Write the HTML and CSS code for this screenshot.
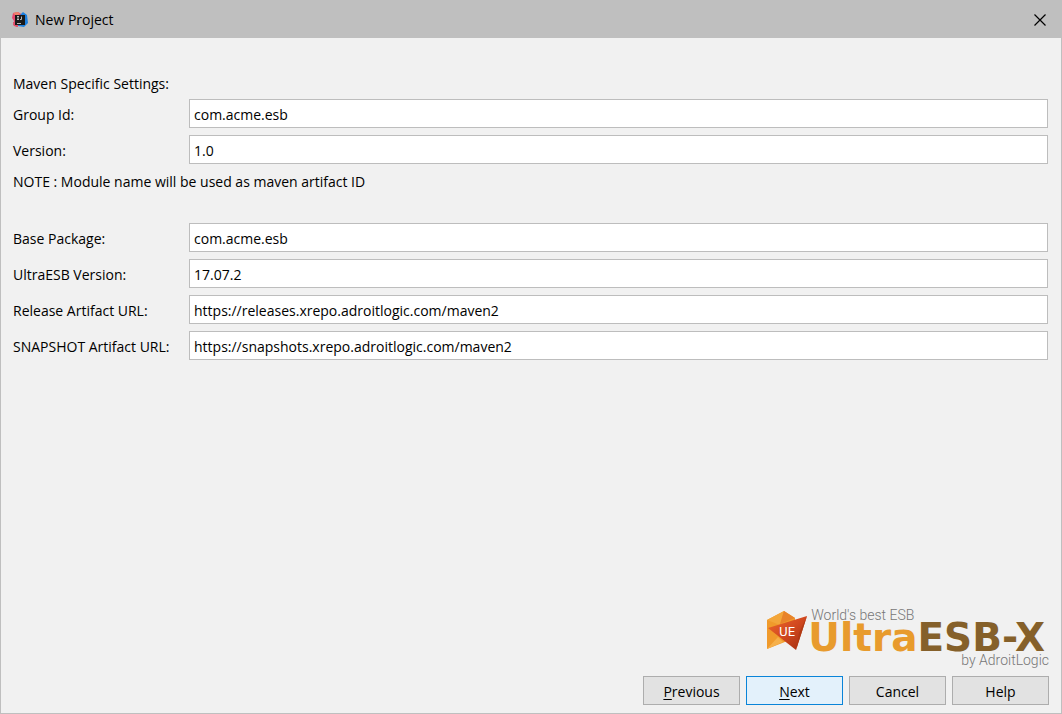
FILE: index.html
```html
<!DOCTYPE html>
<html lang="en">
<head>
<meta charset="utf-8">
<meta name="viewport" content="width=device-width, initial-scale=1">
<title>New Project</title>
<link rel="stylesheet" href="styles.css">
</head>
<body>
<div class="dialog">
  <header class="titlebar">
    <svg class="app-icon" viewBox="0 0 16 16" aria-hidden="true">
      <path d="M1 1 6 0l5 3-2 8-4 4-4-2 1-4-2-3z" fill="#e8486f"/>
      <path d="M1 10h5v5l-4-1z" fill="#e0506a"/>
      <path d="M8 3l3-3 4 3 1 8-4 4-6-1z" fill="#1c80e0"/>
      <path d="M1 1l5-1 2 2-4 2z" fill="#f0806a"/>
      <rect x="3" y="3" width="10" height="10" fill="#1a1a1a"/>
      <path d="M5 4.500h2M6 4.500v3M5 7.500h2M8 7.500h1.500v-3M5 11.500h4" stroke="#bbb" fill="none"/>
    </svg>
    <h1 class="title">New Project</h1>
    <button class="close" type="button" aria-label="Close">
      <svg class="close-icon" viewBox="0 0 12 12" aria-hidden="true"><path d="M.5.5l11 11M11.500.5l-11 11" stroke="#000" stroke-width="1.200" fill="none"/></svg>
    </button>
  </header>
  <form class="content">
    <h2 class="heading">Maven Specific Settings:</h2>
    <div class="fields">
      <label for="group">Group Id:</label>
      <input id="group" type="text" value="com.acme.esb">
      <label for="version">Version:</label>
      <input id="version" type="text" value="1.0">
    </div>
    <p class="note">NOTE : Module name will be used as maven artifact ID</p>
    <div class="fields">
      <label for="package">Base Package:</label>
      <input id="package" type="text" value="com.acme.esb">
      <label for="esb">UltraESB Version:</label>
      <input id="esb" type="text" value="17.07.2">
      <label for="release">Release Artifact URL:</label>
      <input id="release" type="text" value="https://releases.xrepo.adroitlogic.com/maven2">
      <label for="snapshot">SNAPSHOT Artifact URL:</label>
      <input id="snapshot" type="text" value="https://snapshots.xrepo.adroitlogic.com/maven2">
    </div>
    <div class="brand">
      <svg class="brand-mark" viewBox="0 0 42 42">
        <defs>
          <linearGradient id="red" x1="0" y1="0" x2="1" y2="1">
            <stop offset="0" stop-color="#ef6a2c"/><stop offset=".5" stop-color="#d1481f"/><stop offset="1" stop-color="#9e2d10"/>
          </linearGradient>
        </defs>
        <path d="M1 10 18 1l11 7v20L1 39z" fill="#f09a2b"/>
        <path d="M1 10 18 1l-4 14z" fill="#f3a63a"/>
        <path d="M18 1l11 7-15 6z" fill="#e8832a"/>
        <path d="M1 39 12 27l5 5z" fill="#f6b04a"/>
        <path d="M2 18 41 6 30 40z" fill="url(#red)"/>
        <path d="M41 6 33 23l-3 17z" fill="#b23a14"/>
        <text class="mark-text" x="13" y="26">UE</text>
      </svg>
      <div class="brand-text">
        <span class="tagline">World's best ESB</span>
        <span class="wordmark">Ultra<span class="wordmark-dark">ESB-X</span></span>
        <span class="tagline byline">by AdroitLogic</span>
      </div>
    </div>
    <div class="actions">
      <button class="action" type="button"><u>P</u>revious</button>
      <button class="action primary" type="button"><u>N</u>ext</button>
      <button class="action" type="button">Cancel</button>
      <button class="action" type="button">Help</button>
    </div>
  </form>
</div>
</body>
</html>
```
FILE: styles.css
```css
* { box-sizing: border-box; }
body { margin: 0; }
.dialog {
  min-height: 100vh;
  display: flex;
  flex-direction: column;
  border: 1px solid #bfbfbf;
  background: #f1f1f1;
  color: #000;
  font: 14px/20px "Open Sans", "Noto Sans", sans-serif;
}
.titlebar {
  height: 37px;
  flex: none;
  display: flex;
  align-items: center;
  padding: 0 14px 0 11px;
  background: #bfbfbf;
}
.app-icon { width: 16px; height: 16px; margin-right: 7px; }
.title, .heading { margin: 0; font-size: 14px; font-weight: 400; }
.close {
  width: 14px;
  height: 14px;
  margin-left: auto;
  padding: 0;
  border: 0;
  background: none;
  display: grid;
  place-items: center;
}
.close-icon { width: 12px; height: 12px; }
.content {
  flex: 1;
  display: flex;
  flex-direction: column;
  padding: 36px 12px 8px;
}
.heading { margin-bottom: 5px; }
.fields {
  display: grid;
  grid-template-columns: 176px 1fr;
  row-gap: 7px;
  align-items: center;
  padding-right: 1px;
}
.fields label { padding-top: 2px; }
.fields input {
  width: 100%;
  height: 29px;
  padding: 2px 4px 0;
  border: 1px solid #bdbdbd;
  border-radius: 0;
  background: #fff;
  color: #000;
  font: inherit;
}
.note { margin: 8px 0 31px; }
.brand {
  display: flex;
  align-self: flex-end;
  align-items: flex-start;
  margin-top: auto;
}
.brand-mark { width: 42px; height: 42px; margin-top: 2px; }
.mark-text { font: 12px "DejaVu Sans", sans-serif; fill: #fff; }
.brand-text { display: flex; flex-direction: column; }
.tagline {
  padding-left: 3px;
  color: #777;
  font: 300 14px/15px Roboto, sans-serif;
}
.wordmark {
  margin-right: 4px;
  color: #e89b2d;
  font: 700 39px/30px "DejaVu Sans", sans-serif;
}
.wordmark-dark { color: #85602a; }
.byline { align-self: flex-end; }
.actions {
  display: flex;
  justify-content: flex-end;
  gap: 6px;
  margin-top: 8px;
}
.action {
  width: 97px;
  height: 29px;
  padding: 2px 0 0;
  border: 1px solid #adadad;
  background: #e2e2e2;
  color: #000;
  font: inherit;
}
.action u { text-underline-offset: 2px; }
.primary { border-color: #0a84d8; background: #e3f1fb; }
```
